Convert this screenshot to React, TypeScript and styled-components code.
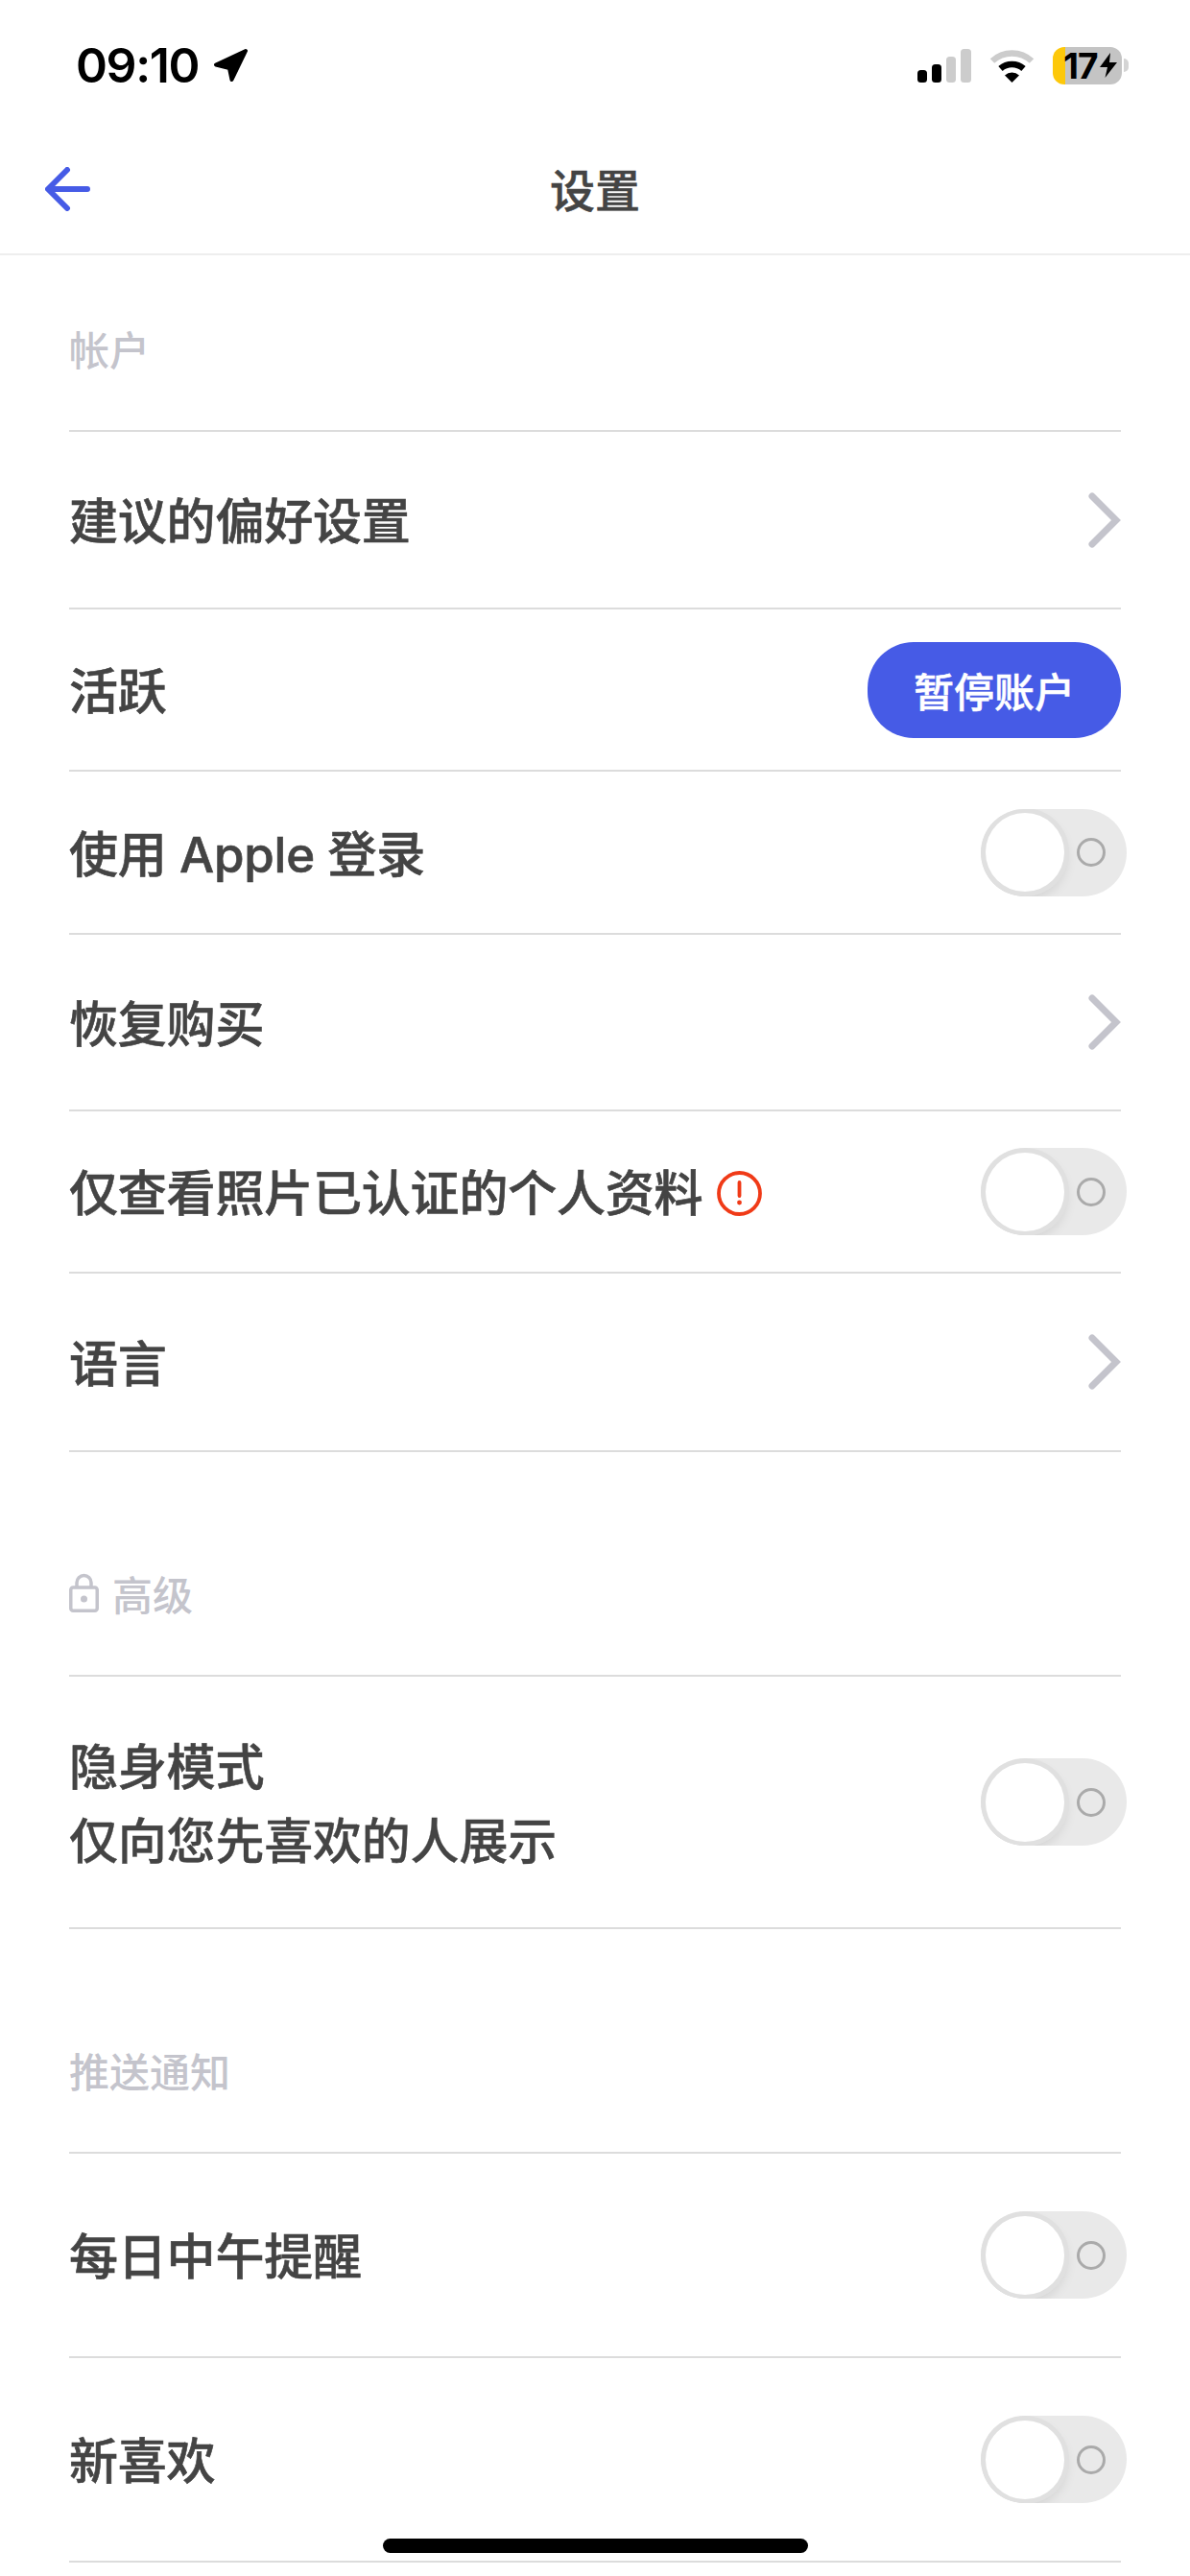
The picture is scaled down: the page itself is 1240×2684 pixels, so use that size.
import { createGlobalStyle, styled } from 'styled-components';

const GlobalStyle = createGlobalStyle`
  html, body {
    margin: 0;
    padding: 0;
    background: #fff;
  }
  * {
    box-sizing: border-box;
  }
`;

const FONT = `Inter, "Noto Sans CJK SC", "Noto Sans", sans-serif`;

type RowData = {
  label: string;
  sub?: string;
  height: number;
  control: 'chevron' | 'toggle' | 'button';
  alert?: boolean;
};

type SectionData = {
  title: string;
  locked?: boolean;
  rows: RowData[];
};

const sections: SectionData[] = [
  {
    title: '帐户',
    rows: [
      { label: '建议的偏好设置', height: 185, control: 'chevron' },
      { label: '活跃', height: 169, control: 'button' },
      { label: '使用 Apple 登录', height: 170, control: 'toggle' },
      { label: '恢复购买', height: 184, control: 'chevron' },
      { label: '仅查看照片已认证的个人资料', height: 169, control: 'toggle', alert: true },
      { label: '语言', height: 186, control: 'chevron' },
    ],
  },
  {
    title: '高级',
    locked: true,
    rows: [{ label: '隐身模式', sub: '仅向您先喜欢的人展示', height: 263, control: 'toggle' }],
  },
  {
    title: '推送通知',
    rows: [
      { label: '每日中午提醒', height: 213, control: 'toggle' },
      { label: '新喜欢', height: 213, control: 'toggle' },
    ],
  },
];

function LocationIcon() {
  return (
    <svg width="37" height="36" viewBox="0 0 37 36">
      <path
        d="M34 3 L3 17.5 L17 21 L19.5 33 Z"
        fill="#000"
        stroke="#000"
        strokeWidth="4"
        strokeLinejoin="round"
      />
    </svg>
  );
}

function SignalIcon() {
  return (
    <svg width="56" height="35" viewBox="0 0 56 35">
      <rect x="0" y="22" width="10" height="13" rx="3.5" fill="#000" />
      <rect x="15" y="16" width="10" height="19" rx="3.5" fill="#000" />
      <rect x="30" y="8" width="10" height="27" rx="3.5" fill="#ccc" />
      <rect x="45" y="0" width="11" height="35" rx="3.5" fill="#ccc" />
    </svg>
  );
}

function WifiIcon() {
  return (
    <svg width="47" height="35" viewBox="0 0 47 35">
      <path d="M3 12.5 A 30 30 0 0 1 44 12.5" fill="none" stroke="#ccc" strokeWidth="6.5" />
      <path d="M11.5 20.5 A 18 18 0 0 1 35.5 20.5" fill="none" stroke="#000" strokeWidth="6.5" />
      <path d="M23.5 35 L16 27.5 A 11 11 0 0 1 31 27.5 Z" fill="#000" />
    </svg>
  );
}

function BoltIcon() {
  return (
    <svg width="18" height="26" viewBox="0 0 18 26">
      <path d="M11 0 L0 15 L8 15 L5.5 26 L18 10 L10 10 Z" fill="#000" />
    </svg>
  );
}

function BackArrow() {
  return (
    <svg width="47" height="46" viewBox="0 0 47 46">
      <path
        d="M44 23 H4 M23 3 L3 23 L23 43"
        fill="none"
        stroke="#465be6"
        strokeWidth="6"
        strokeLinecap="round"
        strokeLinejoin="round"
      />
    </svg>
  );
}

function Chevron() {
  return (
    <svg width="34" height="58" viewBox="0 0 34 58">
      <path
        d="M4 4 L29 29 L4 54"
        fill="none"
        stroke="#c4c4cc"
        strokeWidth="7"
        strokeLinecap="round"
        strokeLinejoin="miter"
      />
    </svg>
  );
}

function LockIcon() {
  return (
    <svg width="31" height="41" viewBox="0 0 31 41">
      <path d="M8 16 V10 A 7.5 7.5 0 0 1 23 10 V16" fill="none" stroke="#c4c4cc" strokeWidth="3.5" />
      <rect x="1.75" y="15" width="27.5" height="24.25" rx="2.5" fill="none" stroke="#c4c4cc" strokeWidth="3.5" />
      <circle cx="15.5" cy="27" r="3.5" fill="#c4c4cc" />
    </svg>
  );
}

function AlertIcon() {
  return (
    <svg width="47" height="47" viewBox="0 0 47 47">
      <circle cx="23.5" cy="23.5" r="21.5" fill="none" stroke="#f03a17" strokeWidth="3.8" />
      <path d="M23.5 12 V26" stroke="#f03a17" strokeWidth="3.8" strokeLinecap="round" />
      <circle cx="23.5" cy="33" r="2.4" fill="#f03a17" />
    </svg>
  );
}

function SettingRow({ row }: { row: RowData }) {
  return (
    <Row $height={row.height}>
      <LabelGroup>
        <Label>
          {row.label}
          {row.alert && <AlertIcon />}
        </Label>
        {row.sub && <SubLabel>{row.sub}</SubLabel>}
      </LabelGroup>
      {row.control === 'chevron' && <Chevron />}
      {row.control === 'button' && <PauseButton>暂停账户</PauseButton>}
      {row.control === 'toggle' && (
        <Toggle>
          <Knob />
          <OffDot />
        </Toggle>
      )}
    </Row>
  );
}

export default function App() {
  return (
    <Page>
      <GlobalStyle />
      <StatusBar>
        <TimeGroup>
          <Time>09:10</Time>
          <LocationIcon />
        </TimeGroup>
        <StatusIcons>
          <SignalIcon />
          <WifiIcon />
          <BatteryWrap>
            <Battery>
              17
              <BoltIcon />
            </Battery>
            <BatteryTip />
          </BatteryWrap>
        </StatusIcons>
      </StatusBar>
      <NavBar>
        <BackButton>
          <BackArrow />
        </BackButton>
        <NavTitle>设置</NavTitle>
      </NavBar>
      <Content>
        {sections.map((section, i) => (
          <section key={section.title}>
            <SectionHeader $first={i === 0}>
              {section.locked && <LockIcon />}
              {section.title}
            </SectionHeader>
            {section.rows.map((row) => (
              <SettingRow key={row.label} row={row} />
            ))}
          </section>
        ))}
      </Content>
      <HomeIndicator />
    </Page>
  );
}

const Page = styled.div`
  position: relative;
  width: 1240px;
  height: 2684px;
  overflow: hidden;
  background: #fff;
  font-family: ${FONT};
  color: #444;
`;

const StatusBar = styled.div`
  display: flex;
  justify-content: space-between;
  align-items: flex-start;
  height: 150px;
  padding: 48px 64px 0 79px;
`;

const TimeGroup = styled.div`
  display: flex;
  align-items: center;
  gap: 15px;
  height: 40px;
`;

const Time = styled.span`
  font-size: 50px;
  font-weight: 600;
  line-height: 40px;
  letter-spacing: -1.4px;
  color: #000;
`;

const StatusIcons = styled.div`
  display: flex;
  align-items: center;
  gap: 19px;
  height: 40px;
`;

const BatteryWrap = styled.div`
  display: flex;
  align-items: center;
  gap: 2px;
`;

const Battery = styled.div`
  display: flex;
  align-items: center;
  gap: 3px;
  width: 72px;
  height: 39px;
  padding-left: 11px;
  border-radius: 12px;
  background: linear-gradient(to right, #fdc80a 13px, #c4c4c4 13px);
  color: #000;
  font-size: 37px;
  font-weight: 700;
  letter-spacing: -1px;
  line-height: 39px;
`;

const BatteryTip = styled.div`
  width: 5px;
  height: 14px;
  border-radius: 0 5px 5px 0;
  background: #d4d4d4;
`;

const NavBar = styled.div`
  display: grid;
  grid-template-columns: 1fr auto 1fr;
  align-items: center;
  height: 116px;
  padding: 0 47px 14px;
  border-bottom: 2px solid #eee;
`;

const BackButton = styled.div`
  display: flex;
  margin-top: -6px;
`;

const NavTitle = styled.h1`
  margin: 0 0 2px;
  font-size: 47px;
  font-weight: 500;
  -webkit-text-stroke: 0.5px #444;
  line-height: 60px;
  color: #444;
`;

const Content = styled.main`
  padding: 0 72px;
`;

const SectionHeader = styled.div<{ $first?: boolean }>`
  display: flex;
  align-items: center;
  gap: 14px;
  height: 184px;
  margin-top: ${(p) => (p.$first ? 0 : 50)}px;
  padding-top: 72px;
  padding-bottom: 62px;
  border-bottom: 2px solid #dcdcdc;
  font-size: 42px;
  font-weight: 500;
  color: #c4c4cc;
`;

const Row = styled.div<{ $height: number }>`
  display: flex;
  justify-content: space-between;
  align-items: center;
  height: ${(p) => p.$height}px;
  border-bottom: 2px solid #dcdcdc;
`;

const LabelGroup = styled.div`
  display: flex;
  flex-direction: column;
  padding-top: 4px;
`;

const Label = styled.div`
  display: flex;
  align-items: center;
  gap: 15px;
  font-size: 51px;
  font-weight: 500;
  -webkit-text-stroke: 0.6px #444;
  letter-spacing: -0.2px;
  line-height: 77px;
  color: #444;
`;

const SubLabel = styled.div`
  font-size: 51px;
  font-weight: 500;
  -webkit-text-stroke: 0.3px #444;
  letter-spacing: -0.2px;
  line-height: 77px;
  color: #444;
`;

const PauseButton = styled.button`
  width: 264px;
  height: 100px;
  padding: 0;
  border: 0;
  border-radius: 48px;
  background: #465be6;
  color: #fff;
  font-family: ${FONT};
  font-size: 42px;
  font-weight: 500;
  -webkit-text-stroke: 0.5px #fff;
`;

const Toggle = styled.div`
  display: flex;
  align-items: center;
  width: 152px;
  height: 91px;
  margin-right: -6px;
  padding: 0 5px;
  overflow: hidden;
  border-radius: 46px;
  background: #e9e9e9;
`;

const Knob = styled.div`
  flex: none;
  width: 82px;
  height: 82px;
  border-radius: 50%;
  background: #fff;
  box-shadow: 0 0 0 5px #e0e0e0, 0 6px 14px rgba(0, 0, 0, 0.14);
`;

const OffDot = styled.div`
  width: 30px;
  height: 30px;
  margin-left: 13px;
  border: 3px solid #aaa;
  border-radius: 50%;
`;

const HomeIndicator = styled.div`
  position: absolute;
  left: 399px;
  bottom: 24px;
  width: 443px;
  height: 15px;
  border-radius: 8px;
  background: #000;
`;
